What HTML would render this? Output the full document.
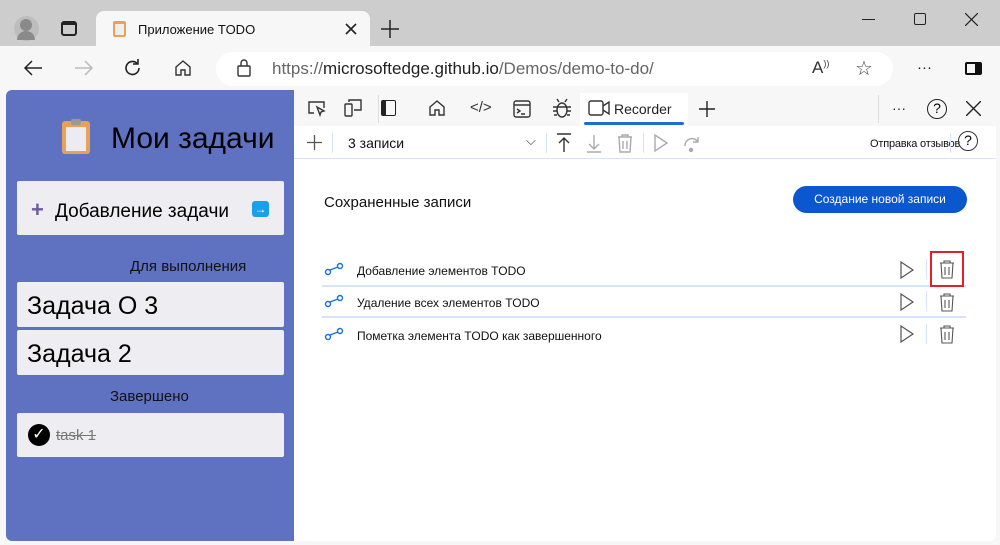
<!DOCTYPE html>
<html><head><meta charset="utf-8"><style>
*{box-sizing:border-box;margin:0;padding:0}
body{width:1000px;height:545px;overflow:hidden;background:#cdcdcd;font-family:"Liberation Sans",sans-serif;position:relative}
.a{position:absolute}
svg{position:absolute;fill:none;stroke:#333;stroke-width:1.4}
.card{position:absolute;left:17px;width:267px;background:#eeeef2;border-radius:2px}
</style></head><body>
<!-- title bar -->
<div class="a" style="left:0;top:0;width:1000px;height:46px;background:#cdcdcd;border-radius:8px 8px 0 0"></div>
<div class="a" style="left:14px;top:16px;width:25px;height:25px;border-radius:50%;background:#bdbdbd"></div>
<div class="a" style="left:20px;top:19px;width:12px;height:12px;border-radius:50%;background:#8a8a8a"></div>
<div class="a" style="left:17px;top:31px;width:18px;height:9px;border-radius:9px 9px 0 0;background:#8a8a8a"></div>
<div class="a" style="left:61px;top:21px;width:16px;height:15px;border:2px solid #222;border-radius:3px;border-top-width:4px"></div>
<div class="a" style="left:96px;top:11px;width:274px;height:36px;background:#f7f7f7;border-radius:8px 8px 0 0"></div>
<div class="a" style="left:113px;top:21px;width:13px;height:16px;background:#e8a15a;border-radius:2px"><div class="a" style="left:2px;top:3px;width:9px;height:11px;background:#eee"></div></div>
<div class="a" style="left:138px;top:22px;font-size:13px;color:#111">Приложение TODO</div>
<svg style="left:345px;top:23px;stroke:#222;stroke-width:1.6" width="12" height="12" viewBox="0 0 12 12"><path d="M1 1l10 10M11 1L1 11"/></svg>
<svg style="left:381px;top:20px;stroke:#222;stroke-width:1.5" width="18" height="18" viewBox="0 0 18 18"><path d="M9 0v18M0 9h18"/></svg>
<div class="a" style="left:862px;top:19px;width:13px;height:1.2px;background:#222"></div>
<div class="a" style="left:914px;top:13px;width:12px;height:12px;border:1.2px solid #222;border-radius:2px"></div>
<svg style="left:965px;top:13px;stroke:#222;stroke-width:1.2" width="13" height="13" viewBox="0 0 13 13"><path d="M0 0l13 13M13 0L0 13"/></svg>
<!-- toolbar -->
<div class="a" style="left:0;top:46px;width:1000px;height:44px;background:#f7f7f7"></div>
<svg style="left:23px;top:59px;stroke:#222;stroke-width:1.5" width="20" height="18" viewBox="0 0 20 18"><path d="M19 9H2M9 2L2 9l7 7"/></svg>
<svg style="left:74px;top:59px;stroke:#bbb;stroke-width:1.5" width="20" height="18" viewBox="0 0 20 18"><path d="M1 9h17M11 2l7 7-7 7"/></svg>
<svg style="left:123px;top:58px;stroke:#222;stroke-width:1.6" width="20" height="20" viewBox="0 0 20 20"><path d="M16 10a6.5 6.5 0 1 1-2-4.7"/><path d="M15 1v5h-5"/></svg>
<svg style="left:173px;top:58px" width="20" height="20" viewBox="0 0 20 20"><path d="M3 9 L10 3 L17 9 V17 H12 V12 H8 V17 H3Z"/></svg>
<div class="a" style="left:216px;top:52px;width:677px;height:34px;background:#fff;border-radius:17px"></div>
<svg style="left:236px;top:58px" width="16" height="20" viewBox="0 0 16 20"><rect x="2" y="8" width="12" height="10" rx="1"/><path d="M5 8V5a3 3 0 0 1 6 0v3"/></svg>
<div class="a" style="left:272px;top:59px;font-size:17px;color:#222"><span style="color:#666">https://</span>microsoftedge.github.io<span style="color:#666">/Demos/demo-to-do/</span></div>
<div class="a" style="left:812px;top:58px;font-size:17px;color:#333">A<sup style="font-size:9px">))</sup></div>
<div class="a" style="left:855px;top:56px;font-size:20px;color:#444">☆</div>
<div class="a" style="left:917px;top:59px;font-size:15px;color:#222">···</div>
<div class="a" style="left:965px;top:62px;width:17px;height:13px;border:2px solid #111;border-right-width:7px;border-radius:2px"></div>
<!-- page area -->
<div class="a" style="left:0;top:90px;width:1000px;height:455px;background:#f7f7f7"></div>
<div class="a" style="left:6px;top:90px;width:288px;height:451px;background:#5f72c1;border-radius:6px 0 0 6px"></div>
<div class="a" style="left:62px;top:121px;width:28px;height:33px;background:#e8a15a;border-radius:3px"><div class="a" style="left:4px;top:6px;width:20px;height:24px;background:#eceaf2"></div><div class="a" style="left:9px;top:-2px;width:10px;height:6px;background:#999;border-radius:2px"></div></div>
<div class="a" style="left:111px;top:122px;font-size:30px;color:#000">Мои задачи</div>
<div class="card" style="top:181px;height:54px"></div>
<div class="a" style="left:31px;top:197px;font-size:22px;color:#6d5a9a;font-weight:bold">+</div>
<div class="a" style="left:55px;top:201px;font-size:19px;color:#000">Добавление задачи</div>
<div class="a" style="left:252px;top:201px;width:17px;height:16px;background:#1aa0e8;border-radius:3px;color:#fff;font-size:12px;text-align:center;line-height:16px;font-weight:bold">→</div>
<div class="a" style="left:130px;top:258px;font-size:15px;color:#111">Для выполнения</div>
<div class="card" style="top:282px;height:45px"></div>
<div class="a" style="left:27px;top:292px;font-size:25px;color:#000">Задача О 3</div>
<div class="card" style="top:330px;height:45px"></div>
<div class="a" style="left:27px;top:340px;font-size:25px;color:#000">Задача 2</div>
<div class="a" style="left:110px;top:388px;font-size:15px;color:#111">Завершено</div>
<div class="card" style="top:413px;height:44px"></div>
<div class="a" style="left:28px;top:424px;width:22px;height:22px;border-radius:50%;background:#000;color:#fff;font-size:16px;text-align:center;line-height:22px">✓</div>
<div class="a" style="left:56px;top:427px;font-size:15px;color:#777;text-decoration:line-through">task 1</div>
<!-- devtools -->
<div class="a" style="left:294px;top:90px;width:702px;height:451px;background:#fff;border-radius:0 6px 6px 0"></div>
<div class="a" style="left:294px;top:90px;width:702px;height:36px;background:#f7f7f7"></div>
<div class="a" style="left:580px;top:93px;width:108px;height:33px;background:#fff"></div>
<div class="a" style="left:584px;top:122px;width:100px;height:3px;background:#1a6fd0;border-radius:2px"></div>
<div class="a" style="left:378px;top:95px;width:1px;height:28px;background:#ddd"></div>
<div class="a" style="left:878px;top:95px;width:1px;height:28px;background:#ddd"></div>
<svg style="left:306px;top:98px" width="22" height="20" viewBox="0 0 22 20"><path d="M8 15H3V4h15v6"/><path d="M11 9l7 4-3 1-1 3z"/></svg>
<svg style="left:342px;top:98px" width="22" height="20" viewBox="0 0 22 20"><rect x="3" y="6" width="7" height="12" rx="1"/><path d="M7 4V2h12v10h-7"/></svg>
<div class="a" style="left:381px;top:100px;width:15px;height:16px;border:1.5px solid #222;border-left-width:5px;border-radius:2px"></div>
<svg style="left:427px;top:98px" width="20" height="20" viewBox="0 0 20 20"><path d="M3 9 L10 3 L17 9 V17 H12 V12 H8 V17 H3Z"/></svg>
<div class="a" style="left:470px;top:99px;font-size:15px;color:#333">&lt;/&gt;</div>
<svg style="left:512px;top:99px" width="20" height="20" viewBox="0 0 20 20"><rect x="2" y="2" width="16" height="16" rx="2"/><path d="M2 6h16M5 10l3 2-3 2M9 15h4"/></svg>
<svg style="left:551px;top:97px" width="22" height="22" viewBox="0 0 22 22"><ellipse cx="11" cy="13" rx="5" ry="7"/><path d="M6 10H2M6 14H2M6 18H3M16 10h4M16 14h4M16 18h3M8 5l-2-3M14 5l2-3M6 10h10"/></svg>
<svg style="left:588px;top:99px" width="24" height="18" viewBox="0 0 24 18"><rect x="1" y="2" width="14" height="14" rx="2"/><path d="M15 7l6-4v12l-6-4"/></svg>
<div class="a" style="left:614px;top:101px;font-size:14px;color:#222">Recorder</div>
<svg style="left:699px;top:101px;stroke:#222;stroke-width:1.4" width="16" height="16" viewBox="0 0 16 16"><path d="M8 0v16M0 8h16"/></svg>
<div class="a" style="left:892px;top:100px;font-size:14px;color:#222">···</div>
<div class="a" style="left:927px;top:99px;width:20px;height:20px;border:1.5px solid #222;border-radius:50%;font-size:14px;text-align:center;line-height:17px">?</div>
<svg style="left:966px;top:101px;stroke:#222;stroke-width:1.4" width="15" height="15" viewBox="0 0 15 15"><path d="M0 0l15 15M15 0L0 15"/></svg>
<!-- recorder toolbar -->
<div class="a" style="left:294px;top:158px;width:702px;height:1px;background:#d6e4f7"></div>
<svg style="left:307px;top:135px;stroke:#555;stroke-width:1.3" width="15" height="15" viewBox="0 0 15 15"><path d="M7.5 0v15M0 7.5h15"/></svg>
<div class="a" style="left:332px;top:133px;width:1px;height:20px;background:#d6e4f7"></div>
<div class="a" style="left:348px;top:135px;font-size:14px;color:#111">3 записи</div>
<div class="a" style="left:526px;top:133px;font-size:13px;color:#333">⌵</div>
<div class="a" style="left:546px;top:133px;width:1px;height:20px;background:#d6e4f7"></div>
<svg style="left:555px;top:132px" width="18" height="22" viewBox="0 0 18 22"><path d="M2 2h14M9 20V6M4 11l5-5 5 5"/></svg>
<svg style="left:585px;top:132px;stroke:#aaa" width="18" height="22" viewBox="0 0 18 22"><path d="M2 20h14M9 3v14M4 12l5 5 5-5"/></svg>
<svg style="left:615px;top:132px;stroke:#aaa" width="20" height="22" viewBox="0 0 20 22"><path d="M3 5h14M7 5V3h6v2M4 5l1 15h10l1-15M8 9v8M12 9v8"/></svg>
<div class="a" style="left:643px;top:133px;width:1px;height:20px;background:#d6e4f7"></div>
<svg style="left:652px;top:133px;stroke:#aaa" width="18" height="20" viewBox="0 0 18 20"><path d="M3 2l12 8-12 8z"/></svg>
<svg style="left:682px;top:134px;stroke:#aaa" width="20" height="20" viewBox="0 0 20 20"><path d="M3 12a7 7 0 0 1 13-4M16 3v5h-5"/><circle cx="9" cy="16" r="1.5" fill="#aaa"/></svg>
<div class="a" style="left:870px;top:138px;font-size:11px;color:#111;letter-spacing:-0.2px">Отправка отзывов</div>
<div class="a" style="left:950px;top:133px;width:1px;height:20px;background:#d6e4f7"></div>
<div class="a" style="left:958px;top:131px;width:20px;height:20px;border:1.5px solid #333;border-radius:50%;font-size:14px;text-align:center;line-height:17px">?</div>
<!-- content -->
<div class="a" style="left:324px;top:194px;font-size:15px;color:#111">Сохраненные записи</div>
<div class="a" style="left:793px;top:186px;width:174px;height:27px;background:#0b57d0;border-radius:14px;color:#fff;font-size:12px;text-align:center;line-height:27px">Создание новой записи</div>
<div class="a" style="left:322px;top:285px;width:644px;height:2px;background:#d6e4f7"></div>
<div class="a" style="left:322px;top:316px;width:644px;height:2px;background:#d6e4f7"></div>
<!-- rows -->
<div class="a" style="left:357px;top:264px;font-size:12px;color:#111">Добавление элементов TODO</div>
<div class="a" style="left:357px;top:296px;font-size:12px;color:#111">Удаление всех элементов TODO</div>
<div class="a" style="left:357px;top:329px;font-size:12px;color:#111">Пометка элемента TODO как завершенного</div>
<svg style="left:324px;top:262px;stroke:#1a6fd0" width="20" height="14" viewBox="0 0 20 14"><circle cx="4" cy="10" r="2.5"/><circle cx="16" cy="4" r="2.5"/><path d="M6 8l8-3"/></svg>
<svg style="left:324px;top:294px;stroke:#1a6fd0" width="20" height="14" viewBox="0 0 20 14"><circle cx="4" cy="10" r="2.5"/><circle cx="16" cy="4" r="2.5"/><path d="M6 8l8-3"/></svg>
<svg style="left:324px;top:327px;stroke:#1a6fd0" width="20" height="14" viewBox="0 0 20 14"><circle cx="4" cy="10" r="2.5"/><circle cx="16" cy="4" r="2.5"/><path d="M6 8l8-3"/></svg>
<svg style="left:898px;top:260px;stroke:#555;stroke-width:1.2" width="18" height="20" viewBox="0 0 18 20"><path d="M3 2l12 8-12 8z"/></svg>
<svg style="left:898px;top:292px;stroke:#555;stroke-width:1.2" width="18" height="20" viewBox="0 0 18 20"><path d="M3 2l12 8-12 8z"/></svg>
<svg style="left:898px;top:324px;stroke:#555;stroke-width:1.2" width="18" height="20" viewBox="0 0 18 20"><path d="M3 2l12 8-12 8z"/></svg>
<div class="a" style="left:926px;top:259px;width:1px;height:20px;background:#d6e4f7"></div>
<div class="a" style="left:926px;top:291px;width:1px;height:20px;background:#d6e4f7"></div>
<div class="a" style="left:926px;top:324px;width:1px;height:20px;background:#d6e4f7"></div>
<svg style="left:937px;top:258px;stroke:#555;stroke-width:1.1" width="20" height="22" viewBox="0 0 20 22"><path d="M3 5h14M7 5V3h6v2M4 5l1 15h10l1-15M8 9v8M12 9v8"/></svg>
<svg style="left:937px;top:291px;stroke:#555;stroke-width:1.1" width="20" height="22" viewBox="0 0 20 22"><path d="M3 5h14M7 5V3h6v2M4 5l1 15h10l1-15M8 9v8M12 9v8"/></svg>
<svg style="left:937px;top:323px;stroke:#555;stroke-width:1.1" width="20" height="22" viewBox="0 0 20 22"><path d="M3 5h14M7 5V3h6v2M4 5l1 15h10l1-15M8 9v8M12 9v8"/></svg>
<div class="a" style="left:930px;top:251px;width:34px;height:36px;border:2.5px solid #e0202a"></div>
</body></html>
